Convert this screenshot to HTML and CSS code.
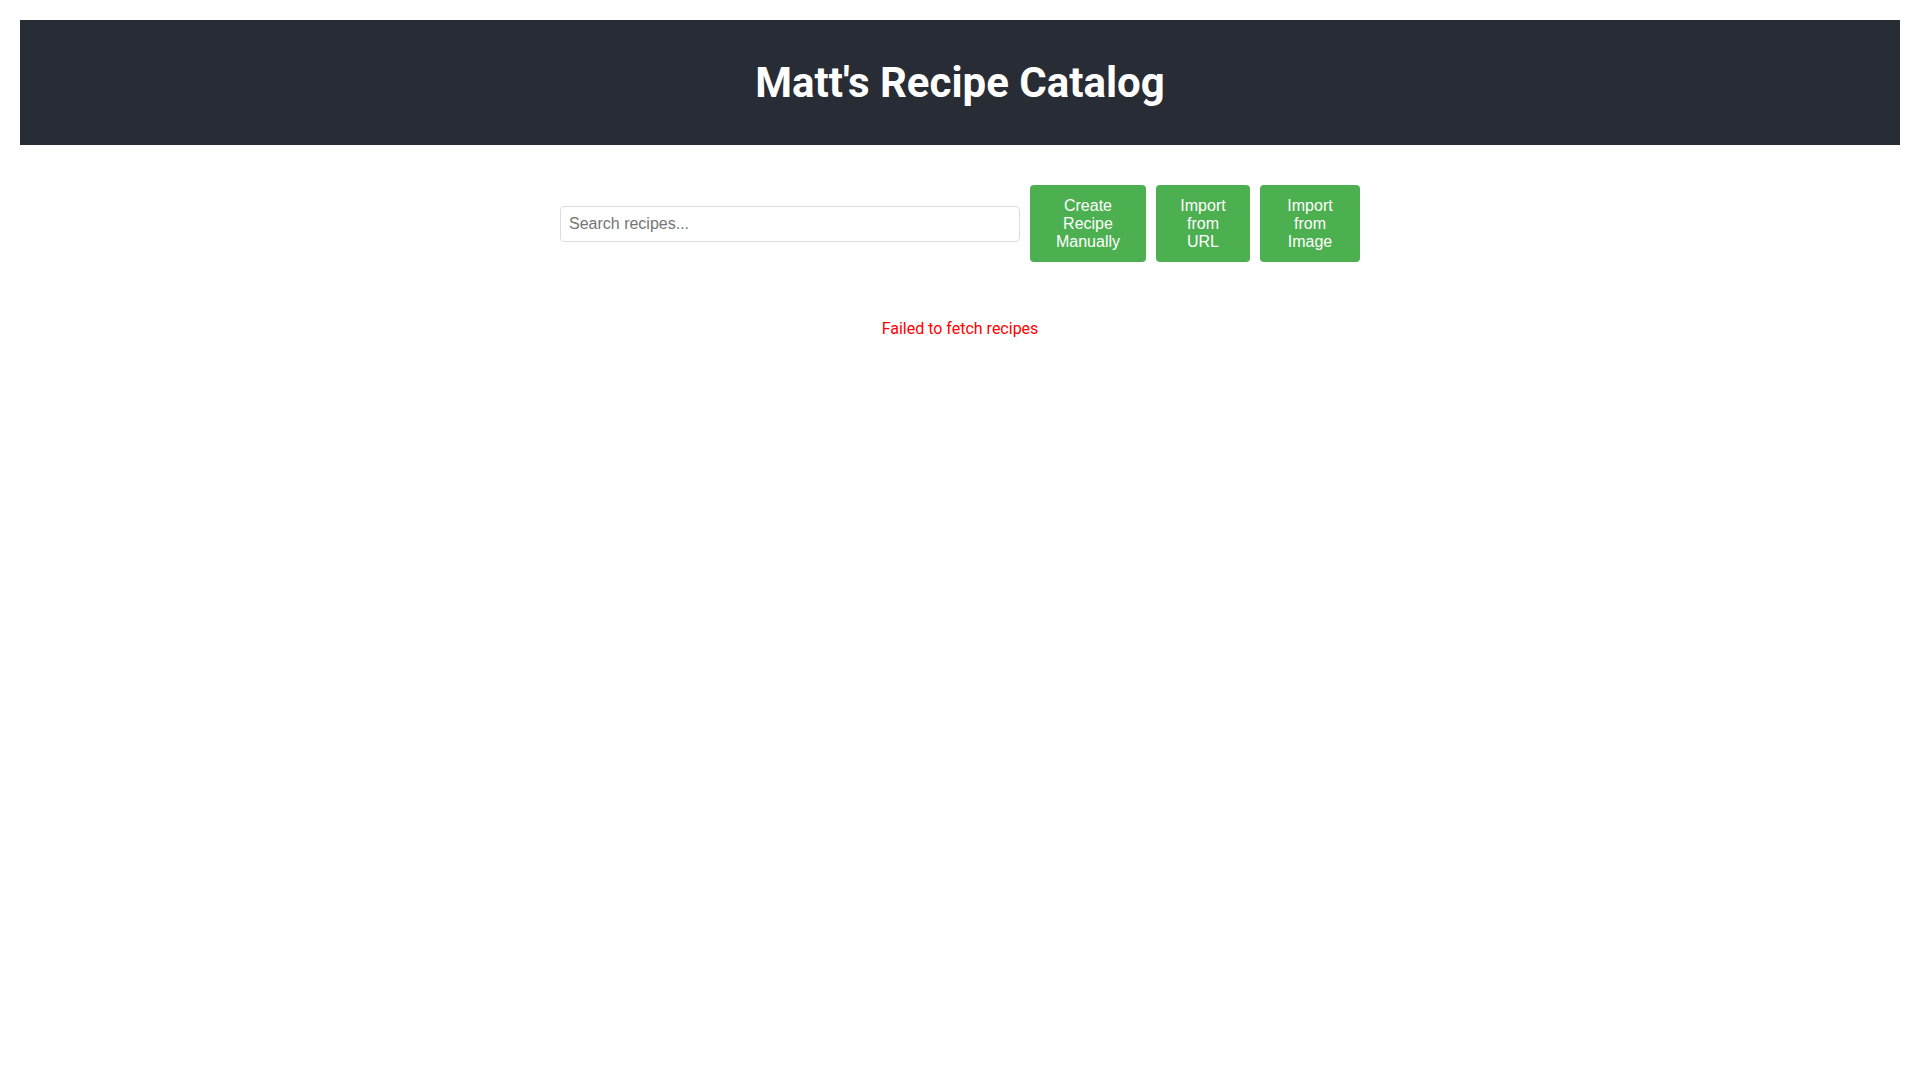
FILE: index.html
```html
<!DOCTYPE html>
<html lang="en">
<head>
<meta charset="utf-8">
<title>Matt's Recipe Catalog</title>
<link rel="stylesheet" href="styles.css">
</head>
<body>
<div class="app">
  <header class="app-header">
    <h1 class="app-title">Matt's Recipe Catalog</h1>
  </header>
  <div class="toolbar">
    <input class="search-input" type="text" placeholder="Search recipes...">
    <button class="btn btn-create">Create Recipe Manually</button>
    <button class="btn btn-url">Import from URL</button>
    <button class="btn btn-image">Import from Image</button>
  </div>
  <p class="error">Failed to fetch recipes</p>
</div>
</body>
</html>
```
FILE: styles.css
```css
html, body {
  margin: 0;
  background: #ffffff;
}
body {
  font-family: Roboto, "Liberation Sans", Arial, sans-serif;
}
.app {
  padding: 20px;
  text-align: center;
}
.app-header {
  background: #282c34;
  color: #ffffff;
  padding: 38px 20px 38px;
}
.app-title {
  margin: 0;
  font-size: 42px;
  font-weight: 700;
  line-height: 49px;
}
.toolbar {
  display: flex;
  align-items: center;
  gap: 10px;
  max-width: 800px;
  margin: 40px auto 0;
}
.search-input {
  flex: 1 1 auto;
  min-width: 0;
  box-sizing: border-box;
  height: 36px;
  padding: 8px;
  font-family: "Liberation Sans", Arial, sans-serif;
  font-size: 16px;
  color: #222;
  border: 1px solid #dddddd;
  border-radius: 4px;
  outline: none;
}
.search-input::placeholder {
  color: #757575;
}
.btn {
  flex: 0 0 auto;
  box-sizing: border-box;
  height: 77px;
  padding: 10px 20px;
  font-family: "Liberation Sans", Arial, sans-serif;
  font-size: 16px;
  line-height: 18px;
  color: #ffffff;
  background: #4caf50;
  border: none;
  border-radius: 4px;
  text-align: center;
  cursor: pointer;
}
.btn-create { width: 116px; }
.btn-url { width: 94px; }
.btn-image { width: 100px; }
.error {
  margin: 57px 0 0;
  color: #ff0000;
  font-size: 16px;
  line-height: 19px;
}
```
